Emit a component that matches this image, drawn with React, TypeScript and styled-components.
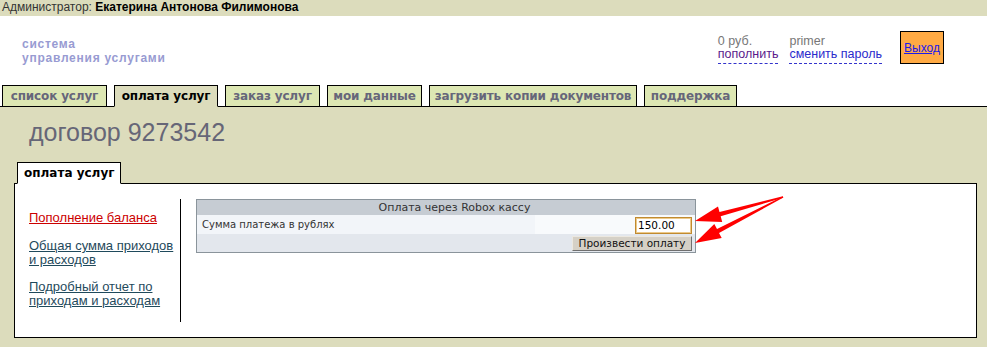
import styled, { createGlobalStyle } from "styled-components";

const GlobalStyle = createGlobalStyle`
  html, body {
    margin: 0;
    padding: 0;
  }
  body {
    background: #dcdcbc;
    font-family: "Liberation Sans", Arial, sans-serif;
    font-size: 12px;
    color: #000;
  }
`;

const Page = styled.div`
  position: relative;
  width: 987px;
  min-height: 347px;
`;

const TopBar = styled.div`
  height: 16px;
  padding-left: 2px;
  line-height: 14px;
  color: #333;
  white-space: nowrap;

  b {
    color: #000;
  }
`;

const Header = styled.div`
  background: #fff;
`;

const HeaderTop = styled.div`
  height: 69px;
  display: flex;
  justify-content: space-between;
  align-items: flex-start;
`;

const Logo = styled.div`
  padding: 21px 0 0 22px;
  font-weight: bold;
  font-size: 12px;
  line-height: 14px;
  letter-spacing: 0.75px;
  color: #989bd2;
`;

const UserArea = styled.div`
  display: flex;
  align-items: flex-start;
  margin-right: 43px;
`;

const UserCol = styled.div<{ $gap: number }>`
  margin-top: 19px;
  margin-right: ${(p) => p.$gap}px;
  display: flex;
  flex-direction: column;
  align-items: flex-start;
  font-size: 12.5px;
  line-height: 13px;
  color: #777;
`;

const DashLink = styled.a<{ $color: string }>`
  color: ${(p) => p.$color};
  text-decoration: none;
  border-bottom: 1px dashed #3333cc;
  padding-bottom: 2px;
  cursor: pointer;
`;

const ExitBox = styled.div`
  margin-top: 15px;
  width: 44px;
  height: 33px;
  box-sizing: border-box;
  border: 1px solid #000;
  background: #ffaa44;
  display: flex;
  align-items: center;
  justify-content: center;
  line-height: 14px;

  a {
    color: #1a1aee;
    text-decoration: underline;
  }
`;

const TabsRow = styled.div`
  height: 21px;
  display: flex;
  align-items: flex-end;
  gap: 7px;
  padding-left: 2px;
  border-bottom: 1px solid #000;
`;

const Tab = styled.div<{ $active?: boolean; $w: number }>`
  width: ${(p) => p.$w}px;
  height: 22px;
  box-sizing: border-box;
  margin-bottom: -1px;
  border: 1px solid #000;
  border-bottom-color: ${(p) => (p.$active ? "#dcdcbc" : "#000")};
  background: ${(p) => (p.$active ? "#dcdcbc" : "#dde7b3")};
  color: ${(p) => (p.$active ? "#000" : "#66667a")};
  font-family: "DejaVu Sans", Verdana, sans-serif;
  font-weight: bold;
  font-size: 12px;
  line-height: 20px;
  letter-spacing: -0.15px;
  text-align: center;
  white-space: nowrap;
`;

const Main = styled.div`
  padding-top: 11px;
`;

const Title = styled.h1`
  margin: 0 0 16px;
  padding-left: 29px;
  font-weight: normal;
  font-size: 25px;
  line-height: 28px;
  color: #666677;
`;

const SubTab = styled.div`
  position: relative;
  z-index: 1;
  width: fit-content;
  height: 22px;
  box-sizing: border-box;
  margin: 0 0 -1px 17px;
  padding: 0 6px;
  border: 1px solid #000;
  border-bottom-color: #fff;
  background: #fff;
  font-family: "DejaVu Sans", Verdana, sans-serif;
  font-weight: bold;
  font-size: 12px;
  line-height: 20px;
`;

const ContentBox = styled.div`
  margin: 0 10px 0 14px;
  height: 155px;
  box-sizing: border-box;
  border: 1px solid #000;
  background: #fff;
  display: flex;
  align-items: flex-start;
  padding: 15px 14px 0;
`;

const Sidebar = styled.div`
  width: 152px;
  height: 123px;
  box-sizing: border-box;
  border-right: 1px solid #000;
  padding-top: 12px;
`;

const SideLink = styled.a<{ $current?: boolean; $gap?: number }>`
  display: block;
  margin-top: ${(p) => p.$gap ?? 0}px;
  font-size: 13px;
  line-height: 14px;
  color: ${(p) => (p.$current ? "#cc0000" : "#1f4a5c")};
  text-decoration: underline;
  cursor: pointer;
`;

const PayTable = styled.div`
  margin-left: 15px;
  width: 500px;
  box-sizing: border-box;
  border: 1px solid #8a949b;
  font-family: "DejaVu Sans", Verdana, sans-serif;
  font-size: 10px;
  color: #333;
`;

const PayHead = styled.div`
  height: 15px;
  padding-left: 17px;
  line-height: 15px;
  font-size: 11px;
  background: #c6ccd3;
  text-align: center;
`;

const PayRow = styled.div`
  height: 19px;
  display: flex;
`;

const LabelCell = styled.div`
  width: 338px;
  padding-left: 5px;
  box-sizing: border-box;
  line-height: 19px;
  background: #f2f5f9;
`;

const InputCell = styled.div`
  flex: 1;
  display: flex;
  justify-content: flex-end;
  align-items: center;
  padding-right: 3px;
  background: #f8fafc;
`;

const AmountInput = styled.input`
  width: 57px;
  height: 17px;
  margin-top: 1px;
  box-sizing: border-box;
  padding: 0 2px;
  border: 1px solid #c08a30;
  box-shadow: inset 0 0 0 1px #ecc98a;
  outline: none;
  font-family: "DejaVu Sans", Verdana, sans-serif;
  font-size: 10.5px;
  color: #000;
`;

const ActionRow = styled.div`
  height: 18px;
  box-sizing: border-box;
  padding: 2px 3px 0 0;
  display: flex;
  justify-content: flex-end;
  background: #e3e7ed;
`;

const PayButton = styled.button`
  width: 120px;
  height: 15px;
  box-sizing: border-box;
  padding: 0;
  border: 1px solid;
  border-color: #ece8e0 #6f6f6f #6f6f6f #ece8e0;
  background: #d5d0c6;
  font-family: "DejaVu Sans", Verdana, sans-serif;
  font-size: 10.5px;
  line-height: 13px;
  color: #111;
  cursor: pointer;
`;

const Arrows = styled.svg`
  position: absolute;
  left: 0;
  top: 0;
  pointer-events: none;
`;

const tabs = [
  { label: "список услуг", w: 105 },
  { label: "оплата услуг", w: 104 },
  { label: "заказ услуг", w: 95 },
  { label: "мои данные", w: 95 },
  { label: "загрузить копии документов", w: 208 },
  { label: "поддержка", w: 93 },
];

export default function App() {
  return (
    <Page>
      <GlobalStyle />
      <TopBar>
        Администратор: <b>Екатерина Антонова Филимонова</b>
      </TopBar>
      <Header>
        <HeaderTop>
          <Logo>
            система
            <br />
            управления услугами
          </Logo>
          <UserArea>
            <UserCol $gap={11}>
              <span>0 руб.</span>
              <DashLink $color="#5a1a8b">пополнить</DashLink>
            </UserCol>
            <UserCol $gap={18}>
              <span>primer</span>
              <DashLink $color="#2a2acc">сменить пароль</DashLink>
            </UserCol>
            <ExitBox>
              <a href="#">Выход</a>
            </ExitBox>
          </UserArea>
        </HeaderTop>
        <TabsRow>
          {tabs.map((t, i) => (
            <Tab key={t.label} $w={t.w} $active={i === 1}>
              {t.label}
            </Tab>
          ))}
        </TabsRow>
      </Header>
      <Main>
        <Title>договор 9273542</Title>
        <SubTab>оплата услуг</SubTab>
        <ContentBox>
          <Sidebar>
            <SideLink $current>Пополнение баланса</SideLink>
            <SideLink $gap={14}>
              Общая сумма приходов
              <br />и расходов
            </SideLink>
            <SideLink $gap={13}>
              Подробный отчет по
              <br />
              приходам и расходам
            </SideLink>
          </Sidebar>
          <PayTable>
            <PayHead>Оплата через Robox кассу</PayHead>
            <PayRow>
              <LabelCell>Сумма платежа в рублях</LabelCell>
              <InputCell>
                <AmountInput defaultValue="150.00" />
              </InputCell>
            </PayRow>
            <ActionRow>
              <PayButton>Произвести оплату</PayButton>
            </ActionRow>
          </PayTable>
        </ContentBox>
      </Main>
      <Arrows width={987} height={347} viewBox="0 0 987 347">
        <polygon
          fill="#ff0000"
          points="695,221 718,206.5 719.5,212.1 782.8,196.2 783.2,197.8 720.7,216.3 722.2,221.9"
        />
        <polygon
          fill="#ff0000"
          points="695,243 714.3,223.9 717,229.1 782.6,196.4 783.4,197.6 719,232.9 721.7,238.1"
        />
      </Arrows>
    </Page>
  );
}
